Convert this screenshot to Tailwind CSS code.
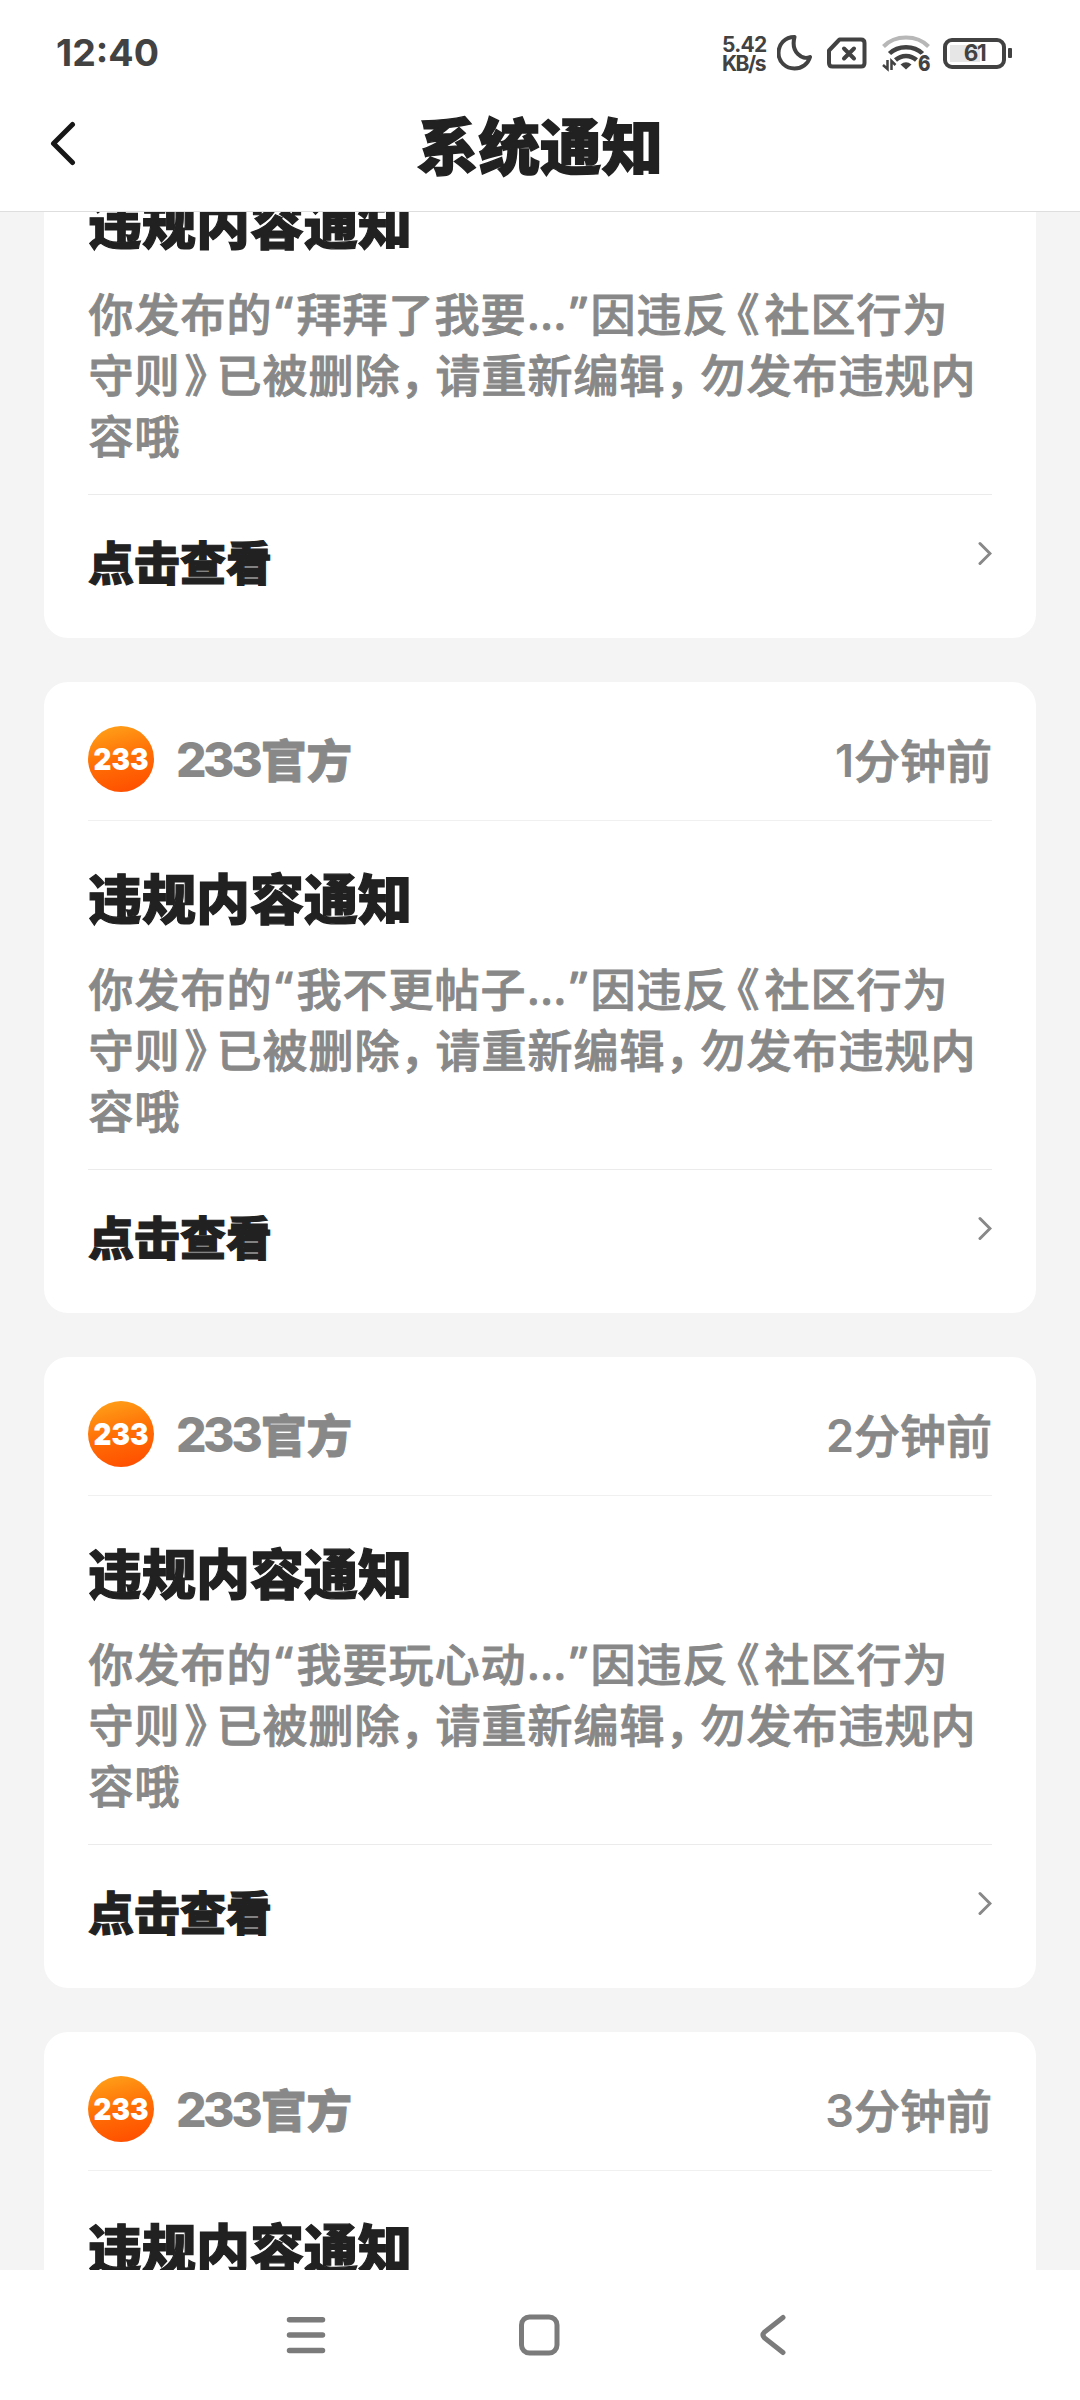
<!DOCTYPE html>
<html lang="zh-CN">
<head>
<meta charset="utf-8">
<title>系统通知</title>
<script src="https://cdn.jsdelivr.net/npm/@tailwindcss/browser@4"></script>
</head>
<body class="flex h-[2400px] w-[1080px] flex-col overflow-hidden bg-[#f4f4f4] font-['Noto_Sans_CJK_SC',sans-serif] text-[#212121]">

<header class="flex h-[212px] shrink-0 flex-col border-b border-[#dedede] bg-white">
  <div class="flex h-[104px] items-center justify-between pr-[68px] pl-[56px] text-[#424242]">
    <span class="pt-[2px] font-['Inter',sans-serif] text-[37.500px] leading-[48px] font-bold">12:40</span>
    <div class="flex h-[42px] items-center pt-[2px]">
      <div class="flex w-[55px] flex-col pt-[1px] font-['Inter',sans-serif] text-[21px] leading-[19px] font-bold">
        <span class="tracking-[-0.700px]">5.42</span><span class="tracking-[-1.500px]">KB/s</span>
      </div>
      <svg class="h-[40px] w-[50px]" viewBox="0 0 50 40" fill="none" stroke="#424242" stroke-width="4" stroke-linejoin="round"><path d="M17.500 4C8 4 1.500 11 1.500 20C1.500 29 9 35.500 17.500 35.500C25 35.500 31 31 33 24C25 27.500 13.500 19 17.500 4Z"/></svg>
      <svg class="h-[40px] w-[55px]" viewBox="0 0 55 40" fill="none" stroke="#424242" stroke-width="4" stroke-linejoin="round" stroke-linecap="round"><path d="M12.500 6.500H34Q37.500 6.500 37.500 10V30Q37.500 33.500 34 33.500H5.500Q2 33.500 2 30V17.500Z"/><path d="M17 15.500l10 10M27 15.500l-10 10"/></svg>
      <svg class="h-[40px] w-[61px]" viewBox="0 0 61 40" fill="none" stroke="#424242" stroke-width="4.500"><path d="M1.500 13.500C13 1.500 35 1.500 46.500 13.500" stroke="#b7b7b7" stroke-width="4"/><path d="M7.500 20.500C16 12 32 12 40.500 20.500M13.500 27C19.500 21.500 28.500 21.500 34.500 27"/><path d="M18.500 31.500Q24 27 29.500 31.500L24 36.500Z" fill="#424242" stroke="none"/><path d="M5.500 27v9L1 32M9.500 37v-9l4 4" stroke-width="2.500"/><text x="36" y="37.500" font-family="Inter" font-size="22" font-weight="800" fill="#424242" stroke="#fff" stroke-width="3" paint-order="stroke" textLength="12.500" lengthAdjust="spacingAndGlyphs">6</text></svg>
      <div class="flex items-center gap-[2px]">
        <div class="flex h-[31px] w-[63px] items-center rounded-[9px] border-4 border-[#424242] p-[3px]">
          <div class="flex h-full w-full items-center justify-center bg-linear-to-r from-[#e6e6e6] from-62% to-white to-62% font-['Inter',sans-serif] text-[22.500px] leading-[28px] font-bold tracking-[-1.500px]">61</div>
        </div>
        <div class="h-[10px] w-[4px] rounded-[1px] bg-[#424242]"></div>
      </div>
    </div>
  </div>
  <div class="grid h-[88px] grid-cols-[1fr_auto_1fr] items-center">
    <svg class="mb-[10px] ml-[49px] h-[46px] w-[28px]" viewBox="0 0 28 46" fill="none" stroke="#171717" stroke-width="5" stroke-linecap="round" stroke-linejoin="round"><path d="M23.500 4.500L4.500 23.500L23.500 42.500"/></svg>
    <h1 class="mt-[-8px] text-[61.500px] leading-[88px] font-black [-webkit-text-stroke:1.400px_#212121]">系统通知</h1>
  </div>
</header>

<main class="min-h-0 flex-1 overflow-hidden">
  <div id="list" class="-mt-[205px] flex flex-col gap-[44px] px-[44px]"></div>
</main>

<nav class="flex h-[130px] shrink-0 items-center bg-white pl-[285px]">
  <svg class="h-[44px] w-[42px]" viewBox="0 0 42 44" stroke="#7b7b7b" stroke-width="5.500" stroke-linecap="round"><path d="M4.500 6.700H37.500M4.500 22H37.500M4.500 37.400H37.500"/></svg>
  <svg class="ml-[190px] h-[44px] w-[44px]" viewBox="0 0 44 44" fill="none" stroke="#7b7b7b" stroke-width="5"><rect x="4.500" y="4" width="35.500" height="36" rx="8"/></svg>
  <svg class="ml-[197px] h-[44px] w-[32px]" viewBox="0 0 32 44" fill="none" stroke="#7b7b7b" stroke-width="5" stroke-linecap="round"><path d="M25 4.500L6.500 19Q3.500 22 6.500 25L25 39.500"/></svg>
</nav>

<script>
const notices = [
  ["1分钟前", "拜拜了我要"],
  ["1分钟前", "我不更帖子"],
  ["2分钟前", "我要玩心动"],
  ["3分钟前", "我要玩心动"],
];
document.getElementById("list").innerHTML = notices.map(([time, topic]) => `
  <article class="flex h-[631px] shrink-0 flex-col rounded-[24px] bg-white px-[44px]">
    <div class="flex h-[139px] shrink-0 items-center border-b border-[#f0f0f0] pt-[16px] text-[#888]">
      <div class="flex size-[66px] items-center justify-center rounded-full bg-linear-165 from-[#ffa51a] via-[#ff6d05] via-50% to-[#ff4800]">
        <svg class="h-[40px] w-[60px]" viewBox="0 0 60 40"><text x="2.500" y="31" font-family="Inter" font-size="30" font-weight="900" fill="#fff" textLength="55" lengthAdjust="spacingAndGlyphs">233</text></svg>
      </div>
      <div class="ml-[22px] flex flex-1 items-center leading-[68px]"><span class="w-[85px] pt-[2px] font-['Inter',sans-serif] text-[48px] font-extrabold tracking-[-3.500px]">233</span><span class="mb-[3px] text-[45.500px] font-black [-webkit-text-stroke:0.800px_#888]">官方</span></div>
      <div class="flex items-center leading-[68px] font-medium"><span class="pt-[4px] font-['Inter',sans-serif] text-[45px] font-semibold">${time[0]}</span><span class="mb-[3px] text-[46px] [-webkit-text-stroke:0.900px_#888]">${time.slice(1)}</span></div>
    </div>
    <h2 class="mt-[36px] text-[54px] leading-[80px] font-black [-webkit-text-stroke:1.200px_#212121]">违规内容通知</h2>
    <div class="mt-[20px] pl-[0.500px] text-[45px] leading-[61.200px] font-medium tracking-[1px] whitespace-nowrap text-[#888] [-webkit-text-stroke:0.900px_#888]">
      <div class="flex"><span>你发布的</span><span class="w-[24px] text-center font-['Noto_Sans',sans-serif]">“</span><span>${topic}</span><span class="w-[41px] text-center font-['Noto_Sans',sans-serif]">...</span><span class="w-[23px] text-center font-['Noto_Sans',sans-serif]">”</span><span>因违反</span><span class="flex w-[36px] justify-end pr-[4px]">《</span><span>社区行为</span></div>
      <div class="flex"><span>守则</span><span class="w-[36px] pl-[4px]">》</span><span>已被删除</span><span class="w-[35px]">，</span><span>请重新编辑</span><span class="w-[35px]">，</span><span>勿发布违规内</span></div>
      <div>容哦</div>
    </div>
    <div class="mt-[28px] flex flex-1 items-start justify-between border-t border-[#ebebeb]">
      <span class="mt-[31px] text-[46px] leading-[68px] font-black [-webkit-text-stroke:1.100px_#212121]">点击查看</span>
      <svg class="mt-[46px] h-[26px] w-[16px]" viewBox="0 0 16 26" fill="none" stroke="#888" stroke-width="3" stroke-linecap="round"><path d="M4 2.500L14 12.500L4 22.500"/></svg>
    </div>
  </article>`).join("");
</script>
</body>
</html>
